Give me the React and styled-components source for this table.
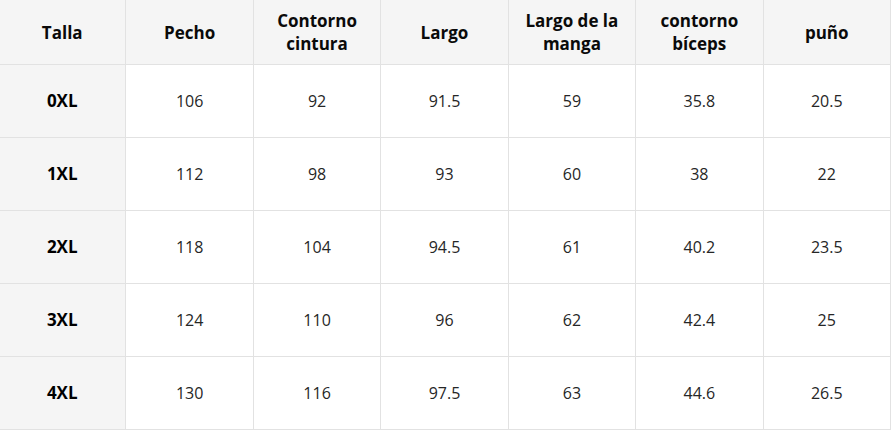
import React from 'react';
import styled, { createGlobalStyle } from 'styled-components';

const GlobalStyle = createGlobalStyle`
  html, body {
    margin: 0;
    padding: 0;
    background: #ffffff;
  }
  body {
    font-family: "Open Sans", "Noto Sans", "Liberation Sans", sans-serif;
    overflow: hidden;
  }
`;

const Wrapper = styled.div`
  width: 894px;
  height: 430px;
  overflow: hidden;
  background: #ffffff;
`;

const SizeTable = styled.table`
  border-collapse: collapse;
  table-layout: fixed;
  width: 893px;
  margin-left: -2px;
  font-size: 16px;
`;

const HeadCell = styled.th`
  background: #f5f5f5;
  color: #0a0a0a;
  font-weight: 700;
  font-size: 17px;
  line-height: 23px;
  height: 46px;
  padding: 9px 12px;
  text-align: center;
  vertical-align: middle;
  border: 1px solid #e2e2e2;
  border-top: none;
`;

const Cell = styled.td`
  background: ${(p) => (p.$label ? '#f5f5f5' : '#ffffff')};
  color: ${(p) => (p.$label ? '#000000' : '#262626')};
  font-weight: ${(p) => (p.$label ? 700 : 400)};
  font-size: ${(p) => (p.$label ? '17px' : '16px')};
  line-height: 24px;
  height: 24px;
  padding: 24px 12px;
  text-align: center;
  vertical-align: middle;
  border: 1px solid #e2e2e2;
`;

const headers = [
  'Talla',
  'Pecho',
  'Contorno cintura',
  'Largo',
  'Largo de la manga',
  'contorno bíceps',
  'puño',
];

const rows = [
  ['0XL', '106', '92', '91.5', '59', '35.8', '20.5'],
  ['1XL', '112', '98', '93', '60', '38', '22'],
  ['2XL', '118', '104', '94.5', '61', '40.2', '23.5'],
  ['3XL', '124', '110', '96', '62', '42.4', '25'],
  ['4XL', '130', '116', '97.5', '63', '44.6', '26.5'],
];

export default function App() {
  return (
    <Wrapper>
      <GlobalStyle />
      <SizeTable>
        <thead>
          <tr>
            {headers.map((h) => (
              <HeadCell key={h}>{h}</HeadCell>
            ))}
          </tr>
        </thead>
        <tbody>
          {rows.map((row) => (
            <tr key={row[0]}>
              {row.map((value, i) => (
                <Cell key={i} $label={i === 0}>
                  {value}
                </Cell>
              ))}
            </tr>
          ))}
        </tbody>
      </SizeTable>
    </Wrapper>
  );
}
